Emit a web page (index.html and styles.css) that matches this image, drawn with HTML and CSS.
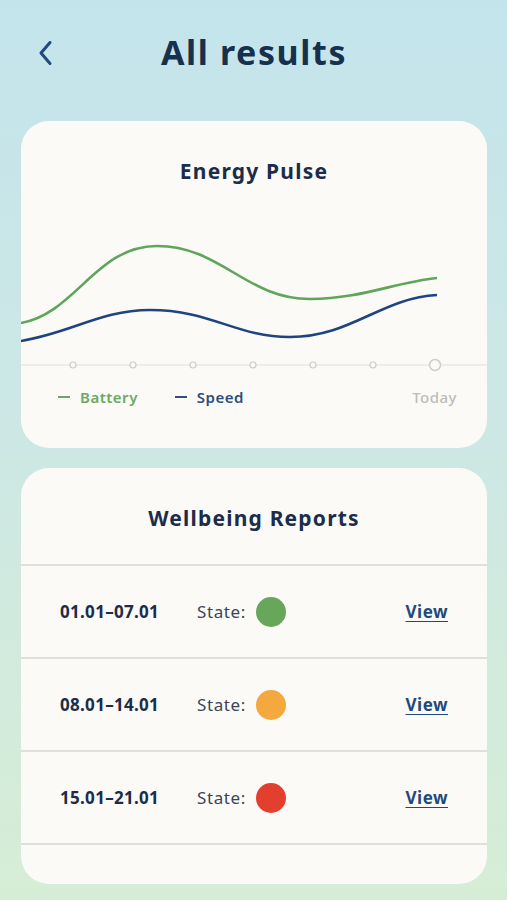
FILE: index.html
```html
<!DOCTYPE html>
<html>
<head>
<meta charset="utf-8">
<title>All results</title>
<link rel="stylesheet" href="styles.css">
</head>
<body>
  <div class="page">
    <div class="header">
      <a class="back" href="#">
        <svg width="16" height="26" viewBox="0 0 16 26"><path d="M13 2.5 L4 13 L13 23.5" fill="none" stroke="#1f4a7a" stroke-width="3" stroke-linecap="round" stroke-linejoin="round"/></svg>
      </a>
      <h1>All results</h1>
    </div>

    <div class="card pulse">
      <h2>Energy Pulse</h2>
      <svg class="chart" width="466" height="175" viewBox="0 0 466 175">
        <line x1="0" y1="164" x2="466" y2="164" stroke="#e2e0dc" stroke-width="1.2"/>
        <path d="M0,122 C55,112 75,45 136,45 C200,45 225,98 289,98 C340,98 375,81 416,77" fill="none" stroke="#5fa55a" stroke-width="2.6"/>
        <path d="M0,140 C50,132 80,109 129,109 C190,109 215,136 269,136 C330,136 360,97 416,94" fill="none" stroke="#1f4580" stroke-width="2.6"/>
        <g fill="#fcfaf7" stroke="#cfcdca" stroke-width="1.2">
          <circle cx="52" cy="164" r="3"/>
          <circle cx="112" cy="164" r="3"/>
          <circle cx="172" cy="164" r="3"/>
          <circle cx="232" cy="164" r="3"/>
          <circle cx="292" cy="164" r="3"/>
          <circle cx="352" cy="164" r="3"/>
          <circle cx="414" cy="164" r="5.5" stroke-width="1.5"/>
        </g>
      </svg>
      <div class="legend">
        <span class="key battery"><i></i>Battery</span>
        <span class="key speed"><i></i>Speed</span>
        <span class="today">Today</span>
      </div>
    </div>

    <div class="card reports">
      <h2>Wellbeing Reports</h2>
      <div class="row">
        <span class="dates">01.01–07.01</span>
        <span class="state">State: <b class="dot green"></b></span>
        <a class="view" href="#">View</a>
      </div>
      <div class="row">
        <span class="dates">08.01–14.01</span>
        <span class="state">State: <b class="dot orange"></b></span>
        <a class="view" href="#">View</a>
      </div>
      <div class="row">
        <span class="dates">15.01–21.01</span>
        <span class="state">State: <b class="dot red"></b></span>
        <a class="view" href="#">View</a>
      </div>
      <div class="row empty"></div>
    </div>
  </div>
</body>
</html>
```

FILE: styles.css
```css
body {
  margin: 0;
  padding: 0;
  font-family: "Noto Sans", Arial, sans-serif;
  color: #1b2d4a;
  background: linear-gradient(180deg, #c4e4ec 0%, #cde8e4 50%, #d6edd5 100%);
  min-height: 900px;
}

.page {
  width: 507px;
  padding: 0 20px 0 21px;
  box-sizing: border-box;
}

.header {
  display: flex;
  align-items: center;
  height: 104px;
  position: relative;
}

.back {
  position: absolute;
  left: 16px;
  top: 40px;
  display: block;
  height: 26px;
}

.header h1 {
  flex: 1;
  margin: 0;
  text-align: center;
  font-size: 34px;
  font-weight: 700;
  color: #17304d;
  letter-spacing: 1.6px;
}

.card {
  background-color: #fcfaf7;
  border-radius: 28px;
  overflow: hidden;
}

.card h2 {
  margin: 0;
  text-align: center;
  font-size: 21px;
  font-weight: 700;
  color: #1b2d4a;
  letter-spacing: 1.2px;
}

.pulse {
  margin-top: 17px;
  height: 327px;
  padding-top: 36px;
  box-sizing: border-box;
}

.chart {
  display: block;
  margin-top: 16px;
}

.legend {
  display: flex;
  align-items: center;
  padding: 11px 30px 0 37px;
  font-size: 15px;
  font-weight: 600;
  letter-spacing: 0.5px;
}

.key {
  display: flex;
  align-items: center;
}

.key i {
  display: inline-block;
  width: 12px;
  height: 2px;
  margin-right: 10px;
}

.battery {
  color: #6aa864;
}

.battery i {
  background-color: #6aa864;
}

.speed {
  color: #2a4f80;
  margin-left: 37px;
}

.speed i {
  background-color: #2a4f80;
}

.today {
  margin-left: auto;
  color: #bdbcba;
  font-weight: 500;
}

.reports {
  margin-top: 20px;
  height: 416px;
}

.reports h2 {
  height: 96px;
  line-height: 100px;
  border-bottom: 2px solid #e0dfdc;
}

.row {
  display: flex;
  align-items: center;
  height: 91px;
  padding: 0 39px;
  border-bottom: 2px solid #e0dfdc;
  font-size: 17px;
}

.row.empty {
  border-bottom: none;
}

.dates {
  width: 137px;
  font-weight: 700;
  color: #1b2d4a;
  letter-spacing: 0.3px;
}

.state {
  display: flex;
  align-items: center;
  color: #3a4657;
  letter-spacing: 0.6px;
}

.dot {
  display: inline-block;
  width: 30px;
  height: 30px;
  border-radius: 50%;
  margin-left: 10px;
}

.green {
  background-color: #67a75c;
}

.orange {
  background-color: #f4a93e;
}

.red {
  background-color: #e23f2e;
}

.view {
  margin-left: auto;
  color: #1e4a7c;
  font-weight: 700;
  letter-spacing: 0.5px;
  text-decoration: underline;
  text-underline-offset: 3px;
}
```
